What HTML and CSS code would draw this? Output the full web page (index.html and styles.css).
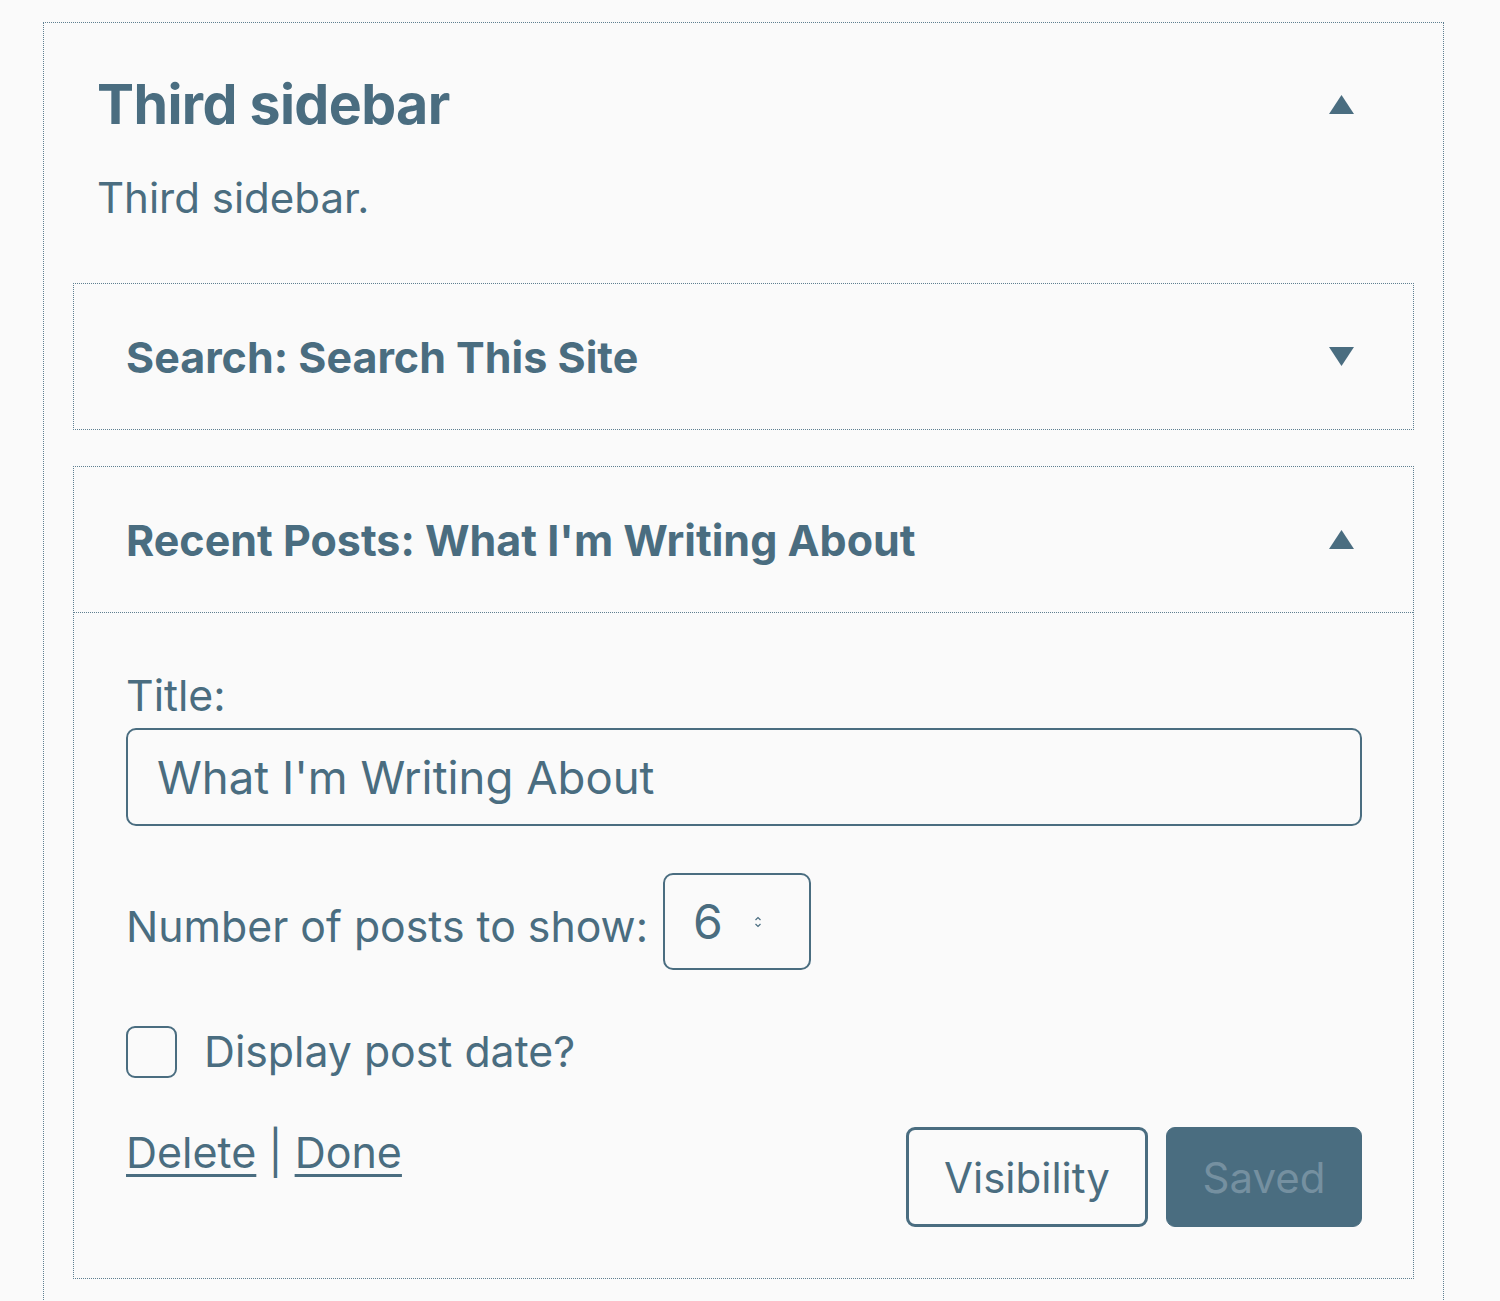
FILE: index.html
```html
<!DOCTYPE html>
<html lang="en">
<head>
<meta charset="utf-8">
<title>Third sidebar</title>
<link rel="stylesheet" href="styles.css">
</head>
<body>
<section class="sidebar">
  <header class="sidebar-head">
    <h2 class="sidebar-title">Third sidebar</h2>
    <svg class="arrow" width="25" height="19" viewBox="0 0 25 19"><polygon points="12.5,0 25,19 0,19"/></svg>
  </header>
  <p class="sidebar-desc">Third sidebar.</p>

  <div class="widget">
    <div class="widget-head">
      <h3 class="widget-title">Search: Search This Site</h3>
      <svg class="arrow" width="25" height="19" viewBox="0 0 25 19"><polygon points="0,0 25,0 12.5,19"/></svg>
    </div>
  </div>

  <div class="widget">
    <div class="widget-head open">
      <h3 class="widget-title">Recent Posts: What I'm Writing About</h3>
      <svg class="arrow" width="25" height="19" viewBox="0 0 25 19"><polygon points="12.5,0 25,19 0,19"/></svg>
    </div>
    <form class="widget-form">
      <label class="field-label" for="title">Title:</label>
      <input class="text-input" id="title" type="text" value="What I'm Writing About">

      <div class="number-row">
        <span class="field-label">Number of posts to show:</span>
        <div class="number-input">
          <span class="number-value">6</span>
          <svg class="spinner" width="8" height="14" viewBox="0 0 8 14"><path d="M1.5 5 L4 2.5 L6.5 5 M1.5 9 L4 11.5 L6.5 9" fill="none" stroke="#4a6d80" stroke-width="1.2"/></svg>
        </div>
      </div>

      <div class="check-row">
        <span class="checkbox"></span>
        <span class="field-label">Display post date?</span>
      </div>

      <div class="actions">
        <div class="links">
          <a href="#" class="link">Delete</a>
          <span class="sep">|</span>
          <a href="#" class="link">Done</a>
        </div>
        <div class="buttons">
          <button type="button" class="btn btn-secondary">Visibility</button>
          <button type="button" class="btn btn-primary">Saved</button>
        </div>
      </div>
    </form>
  </div>
</section>
</body>
</html>
```

FILE: styles.css
```css
* { box-sizing: border-box; }

html, body {
  margin: 0;
  padding: 0;
  background: #fafafa;
}

body {
  font-family: Inter, "Noto Sans", "Liberation Sans", sans-serif;
  color: #4a6d80;
  height: 1301px;
  overflow: hidden;
}

.sidebar {
  margin: 22px 56px 0 43px;
  border: 1px dotted #5f7f90;
  border-bottom: none;
  padding: 0 29px 0 29px;
  min-height: 1300px;
}

.sidebar-head {
  display: flex;
  align-items: center;
  justify-content: space-between;
  padding: 46px 60px 0 24px;
}

.sidebar-title {
  margin: 0;
  font-size: 55.5px;
  line-height: 70px;
  font-weight: 700;
  letter-spacing: -0.6px;
}

.arrow {
  fill: #4a6d80;
  display: block;
  flex: none;
}

.sidebar-desc {
  margin: 33px 0 59px 24px;
  font-size: 42px;
  line-height: 52px;
}

.widget {
  border: 1px dotted #5f7f90;
  margin-bottom: 36px;
}

.widget-head {
  height: 145px;
  display: flex;
  align-items: center;
  justify-content: space-between;
  padding: 0 59px 0 52px;
}

.widget-head.open {
  height: 146px;
  border-bottom: 1px dotted #5f7f90;
}

.widget-title {
  margin: 0;
  font-size: 43px;
  line-height: 52px;
  font-weight: 700;
}

.widget-form {
  padding: 58px 51px 51px 52px;
  display: flex;
  flex-direction: column;
}

.field-label {
  font-size: 42.8px;
  line-height: 50px;
  display: block;
}

.text-input {
  margin-top: 7px;
  height: 98px;
  width: 100%;
  border: 2px solid #4a6d80;
  border-radius: 10px;
  background: #fafafa;
  padding: 0 0 0 29px;
  font-family: inherit;
  font-size: 45.5px;
  color: #4a6d80;
  outline: none;
}

.number-row {
  margin-top: 57px;
  display: flex;
  align-items: center;
  gap: 15px;
}

.number-input {
  width: 148px;
  height: 97px;
  border: 2px solid #4a6d80;
  border-radius: 10px;
  display: flex;
  align-items: center;
  padding-left: 28px;
  gap: 31px;
  margin-top: -10px;
}

.number-value {
  font-size: 48px;
  line-height: 50px;
}

.spinner { display: block; }

.check-row {
  margin-top: 56px;
  display: flex;
  align-items: center;
  gap: 27px;
}

.checkbox {
  width: 51px;
  height: 52px;
  border: 2px solid #4a6d80;
  border-radius: 9px;
  flex: none;
}

.actions {
  margin-top: 49px;
  display: flex;
  justify-content: space-between;
  align-items: flex-start;
}

.links {
  font-size: 43px;
  line-height: 50px;
  margin-top: 0;
  display: flex;
  gap: 12px;
}

.link {
  color: #4a6d80;
  text-decoration: underline;
  text-decoration-thickness: 3px;
  text-underline-offset: 6px;
}

.buttons {
  display: flex;
  gap: 18px;
}

.btn {
  height: 100px;
  border-radius: 9px;
  font-family: inherit;
  font-size: 42px;
  padding: 0;
}

.btn-secondary {
  width: 242px;
  background: #fafafa;
  border: 3px solid #4a6d80;
  color: #4a6d80;
}

.btn-primary {
  width: 196px;
  background: #4a6d80;
  border: 1px solid #4a6d80;
  color: #7590a0;
}
```
